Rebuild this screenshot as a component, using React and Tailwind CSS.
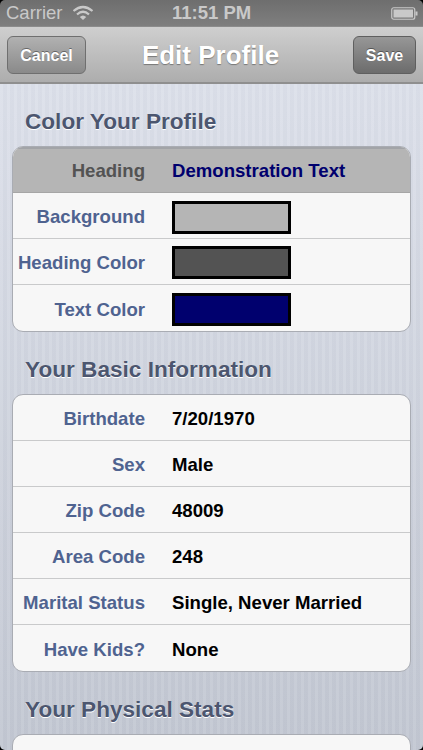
const FONT = "font-['Liberation_Sans',Arial,sans-serif]";

function Row({ label, children, first, last }) {
  return (
    <div className={`flex items-center ${first ? "h-[45px]" : last ? "h-[47px] border-t border-[#c9cacb]" : "h-[46px] border-t border-[#c9cacb]"}`}>
      <div className="w-[132px] pt-[3px] text-right text-[18.6px] font-bold text-[#4f6390] whitespace-nowrap">{label}</div>
      <div className="ml-[27px] pt-[3px] flex-1 text-[18.6px] font-bold text-black">{children}</div>
    </div>
  );
}

function Swatch({ color }) {
  return <div className={`w-[119px] h-[33px] -mt-[1px] border-[3px] border-black ${color}`} />;
}

function SectionTitle({ children }) {
  return (
    <h2 className="h-[26px] pl-[25px] pt-[1px] text-[22.6px] leading-[26px] font-bold text-[#4c566f] [text-shadow:0_1px_0_#fff] whitespace-nowrap">
      {children}
    </h2>
  );
}

function Card({ children, className = "" }) {
  return (
    <div className={`mx-[12px] rounded-[11px] bg-[#f7f7f7] border border-[#a9acb3] overflow-hidden ${className}`}>
      {children}
    </div>
  );
}

export default function App() {
  return (
    <div className={`${FONT} w-[423px] h-[750px] overflow-hidden bg-black`}>
      <div className="relative h-[750px] overflow-hidden rounded-[5px] flex flex-col">
        <div className="h-[26px] shrink-0 bg-gradient-to-b from-[#6e6e6e] to-[#7f7f7f] flex items-center justify-between pl-[6px] pr-[5px] text-[#c9c9c9]">
          <div className="flex items-center gap-[9px]">
            <span className="text-[18.5px] leading-[22px]">Carrier</span>
            <svg width="22" height="16" viewBox="0 0 22 16" fill="none" stroke="#c9c9c9" strokeWidth="2.2">
              <path d="M1.5 6 Q11 -2 20.5 6" />
              <path d="M5 9.5 Q11 4 17 9.5" />
              <path d="M11 15 L7.8 12 Q11 9 14.2 12 Z" fill="#c9c9c9" stroke="none" />
            </svg>
          </div>
          <span className="absolute left-[172px] top-[2px] text-[18.5px] leading-[22px] font-bold">11:51 PM</span>
          <svg width="27" height="13" viewBox="0 0 27 13">
            <rect x="0.75" y="0.75" width="23" height="11.5" rx="2" fill="none" stroke="#c9c9c9" strokeWidth="1.2" />
            <rect x="2.5" y="2.5" width="19.5" height="8" fill="#c9c9c9" />
            <rect x="24.5" y="4.5" width="2" height="4" fill="#c9c9c9" />
          </svg>
        </div>
        <div className="h-[58px] shrink-0 pt-[1px] border-t border-[#8c8c8c] border-b-[2px] border-b-[#8f8f8f] bg-gradient-to-b from-[#cfcfcf] to-[#adadad] flex items-center justify-between px-[7px]">
          <button className="w-[79px] h-[38px] pt-[1px] rounded-[6px] border border-[#6f6f6f] bg-gradient-to-b from-[#b1b1b1] to-[#8a8a8a] text-white text-[16px] font-bold [text-shadow:0_-1px_0_#666]">
            Cancel
          </button>
          <div className="mr-[18px] pt-[1px] text-white text-[26px] font-bold [text-shadow:0_1px_1px_#777]">Edit Profile</div>
          <button className="w-[63px] h-[38px] pt-[1px] rounded-[6px] border border-[#5f5f5f] bg-gradient-to-b from-[#979797] to-[#6c6c6c] text-white text-[16px] font-bold [text-shadow:0_-1px_0_#555]">
            Save
          </button>
        </div>
        <div className="flex-1 pt-[24px] bg-[repeating-linear-gradient(90deg,rgba(255,255,255,0.07)_0px,rgba(255,255,255,0.07)_3px,rgba(120,125,140,0.03)_3px,rgba(120,125,140,0.03)_7px),linear-gradient(180deg,#dce0ea_0%,#c0c5d0_100%)]">
          <SectionTitle>Color Your Profile</SectionTitle>
          <Card className="mt-[12px]">
            <div className="flex items-center h-[46px] bg-[#b5b5b5] border-t-[2px] border-t-[#a2a4a8] border-b border-b-[#a6a6a6]">
              <div className="w-[132px] text-right text-[18.6px] font-bold text-[#535353]">Heading</div>
              <div className="ml-[27px] text-[18.6px] font-bold text-[#00006e]">Demonstration Text</div>
            </div>
            <Row label="Background" first><div className="mt-[2px]"><Swatch color="bg-[#b5b5b5]" /></div></Row>
            <Row label="Heading Color"><Swatch color="bg-[#535353]" /></Row>
            <Row label="Text Color" last><Swatch color="bg-[#00006e]" /></Row>
          </Card>
          <div className="mt-[24px]"><SectionTitle>Your Basic Information</SectionTitle></div>
          <Card className="mt-[12px]">
            <Row label="Birthdate" first>7/20/1970</Row>
            <Row label="Sex">Male</Row>
            <Row label="Zip Code">48009</Row>
            <Row label="Area Code">248</Row>
            <Row label="Marital Status">Single, Never Married</Row>
            <Row label="Have Kids?" last>None</Row>
          </Card>
          <div className="mt-[24px]"><SectionTitle>Your Physical Stats</SectionTitle></div>
          <Card className="mt-[12px] h-[60px]" />
        </div>
      </div>
    </div>
  );
}
